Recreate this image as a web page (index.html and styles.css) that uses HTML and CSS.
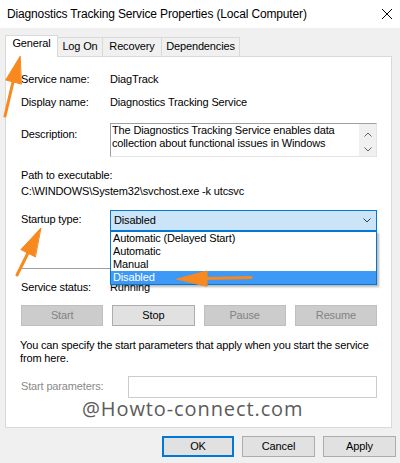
FILE: index.html
```html
<!DOCTYPE html>
<html>
<head>
<meta charset="utf-8">
<title>Diagnostics Tracking Service Properties</title>
<link rel="stylesheet" href="styles.css">
</head>
<body>
<div class="window">
  <div class="titlebar">
    <span class="title">Diagnostics Tracking Service Properties (Local Computer)</span>
    <svg class="close" viewBox="0 0 12 12"><path d="M1 1L11 11M11 1L1 11" stroke="#000" stroke-width="1" fill="none"/></svg>
  </div>
  <div class="tabs">
    <div class="tab active w-general">General</div>
    <div class="tab w-logon">Log On</div>
    <div class="tab w-recovery">Recovery</div>
    <div class="tab w-deps">Dependencies</div>
  </div>
  <div class="panel">
    <div class="row r-name"><span class="label">Service name:</span><span>DiagTrack</span></div>
    <div class="row r-display"><span class="label">Display name:</span><span>Diagnostics Tracking Service</span></div>
    <div class="row r-desc">
      <span class="label desc-label">Description:</span>
      <div class="desc">
        <div class="desc-text">The Diagnostics Tracking Service enables data<br>collection about functional issues in Windows</div>
        <div class="scroll">
          <svg class="chev" viewBox="0 0 8 5"><path d="M0.5 4.5L4 1L7.5 4.5" stroke="#606060" fill="none"/></svg>
          <svg class="chev" viewBox="0 0 8 5"><path d="M0.5 0.5L4 4L7.5 0.5" stroke="#606060" fill="none"/></svg>
        </div>
      </div>
    </div>
    <div class="path-label">Path to executable:</div>
    <div class="path">C:\WINDOWS\System32\svchost.exe -k utcsvc</div>
    <div class="row r-startup">
      <span class="label startup-label">Startup type:</span>
      <div class="select-wrap">
        <div class="select">
          <span>Disabled</span>
          <svg class="sel-chev" viewBox="0 0 8 5"><path d="M0.5 0.5L4 4L7.5 0.5" stroke="#3c3c3c" fill="none"/></svg>
        </div>
        <ul class="dropdown">
          <li>Automatic (Delayed Start)</li>
          <li>Automatic</li>
          <li>Manual</li>
          <li class="hl">Disabled</li>
        </ul>
      </div>
    </div>
    <div class="sep"></div>
    <div class="row r-status"><span class="label">Service status:</span><span>Running</span></div>
    <div class="buttons">
      <div class="btn disabled">Start</div>
      <div class="btn">Stop</div>
      <div class="btn disabled">Pause</div>
      <div class="btn disabled">Resume</div>
    </div>
    <p class="note">You can specify the start parameters that apply when you start the service<br>from here.</p>
    <div class="params">
      <span class="params-label">Start parameters:</span>
      <div class="input"></div>
    </div>
  </div>
  <div class="footer">
    <div class="btn fbtn ok">OK</div>
    <div class="btn fbtn w73">Cancel</div>
    <div class="btn fbtn w73">Apply</div>
  </div>
  <div class="watermark">@Howto-connect.com</div>
  <svg class="arrows" viewBox="0 0 400 463">
    <g fill="#f7891f" stroke="#f7891f" stroke-width="3" stroke-linecap="round">
      <line x1="13" y1="82" x2="5" y2="116"/>
      <polygon points="20,56.5 5.7,80 21.1,84" stroke-width="1" stroke-linejoin="round"/>
      <line x1="28" y1="253" x2="17" y2="275"/>
      <polygon points="40.7,228.3 20.9,249.6 35.1,256.8" stroke-width="1" stroke-linejoin="round"/>
      <line x1="205" y1="278.5" x2="251" y2="277.5"/>
      <polygon points="177,279 207,271 207,286" stroke-width="1" stroke-linejoin="round"/>
    </g>
  </svg>
</div>
</body>
</html>
```
FILE: styles.css
```css
* { box-sizing: border-box; }
html, body { margin: 0; padding: 0; }
body {
  width: 400px;
  height: 463px;
  overflow: hidden;
  background: #f0f0f0;
  font-family: "Liberation Sans", Arial, sans-serif;
  font-size: 11px;
  line-height: 13px;
  letter-spacing: -0.15px;
  color: #000;
}
.window { position: relative; width: 400px; height: 463px; }

.titlebar {
  height: 28px;
  background: #fff;
  display: flex;
  align-items: center;
  justify-content: space-between;
  padding: 0 7px;
}
.title { font-size: 12px; line-height: 15px; white-space: nowrap; }
.close { width: 12px; height: 12px; display: block; }

.tabs {
  position: relative;
  z-index: 1;
  display: flex;
  align-items: flex-start;
  height: 22px;
  margin: 7px 0 0 5px;
}
.tab {
  height: 19px;
  margin-top: 2px;
  margin-left: -1px;
  border: 1px solid #d9d9d9;
  border-bottom: none;
  background: #f0f0f0;
  text-align: center;
  padding-top: 2px;
}
.tab:first-child { margin-left: 0; }
.tab.active {
  height: 22px;
  margin-top: 0;
  background: #fff;
  padding-top: 1px;
  position: relative;
  z-index: 2;
}
.w-general { width: 53px; }
.w-logon { width: 46px; }
.w-recovery { width: 60px; }
.w-deps { width: 79px; }

.panel {
  width: 387px;
  height: 372px;
  margin: -1px 0 0 5px;
  background: #fff;
  border: 1px solid #d9d9d9;
  padding: 16px 14px 0 15px;
}
.row { display: grid; grid-template-columns: 89px 1fr; white-space: nowrap; }
.r-display { margin-top: 10px; }
.r-desc { margin-top: 14px; }
.desc-label { padding-top: 5px; }
.desc {
  height: 34px;
  border: 1px solid #a0a0a0;
  border-right-color: #e3e3e3;
  border-bottom-color: #e3e3e3;
  display: flex;
  justify-content: space-between;
}
.desc-text { padding-left: 1px; white-space: nowrap; }
.scroll {
  width: 17px;
  background: #f0f0f0;
  display: flex;
  flex-direction: column;
  align-items: center;
  padding-top: 8px;
  gap: 10px;
}
.chev { width: 8px; height: 5px; display: block; }

.path-label { margin-top: 12px; }
.path { margin-top: 3px; white-space: nowrap; }

.r-startup { margin-top: 12px; }
.startup-label { padding-top: 3px; }
.select-wrap { position: relative; }
.select {
  height: 21px;
  background: #cce4f7;
  border: 1px solid #0078d7;
  display: flex;
  align-items: center;
  justify-content: space-between;
  padding: 0 5px 0 3px;
}
.sel-chev { width: 8px; height: 5px; display: block; }
.dropdown {
  position: absolute;
  left: 0;
  top: 100%;
  width: 100%;
  margin: 0;
  padding: 0;
  list-style: none;
  background: #fff;
  border: 1px solid #0078d7;
  box-shadow: 2px 2px 2px rgba(0, 0, 0, 0.28);
  z-index: 3;
}
.dropdown li { height: 13px; line-height: 13px; padding-left: 2px; }
.dropdown li.hl { background: #3d99f5; color: #fff; }

.sep { margin-top: 37px; height: 1px; background: #a0a0a0; }
.r-status { margin-top: 12px; }

.buttons {
  margin-top: 11px;
  display: grid;
  grid-template-columns: repeat(4, 1fr);
  gap: 9px;
}
.btn {
  height: 21px;
  border: 1px solid #adadad;
  background: #e1e1e1;
  display: flex;
  align-items: center;
  justify-content: center;
}
.btn.disabled {
  background: #cccccc;
  border-color: #bfbfbf;
  color: #838383;
}
.note { margin: 13px 0 0 -1px; white-space: nowrap; }
.params {
  margin-top: 11px;
  display: grid;
  grid-template-columns: 107px 1fr;
}
.params-label { color: #8a8a8a; padding-top: 4px; white-space: nowrap; }
.input { height: 22px; border: 1px solid #cccccc; background: #fff; }

.footer {
  margin-top: 8px;
  display: flex;
  justify-content: flex-end;
  gap: 8px;
  padding-right: 4px;
}
.fbtn { width: 73px; }
.ok { width: 72px; border: 2px solid #0078d7; }

.watermark {
  position: absolute;
  left: 82px;
  top: 399px;
  font-family: "Open Sans", sans-serif;
  font-size: 20px;
  line-height: 20px;
  letter-spacing: 0.9px;
  color: #5c5c5c;
  white-space: nowrap;
}
.arrows {
  position: absolute;
  left: 0;
  top: 0;
  width: 400px;
  height: 463px;
  pointer-events: none;
  z-index: 5;
}
```
